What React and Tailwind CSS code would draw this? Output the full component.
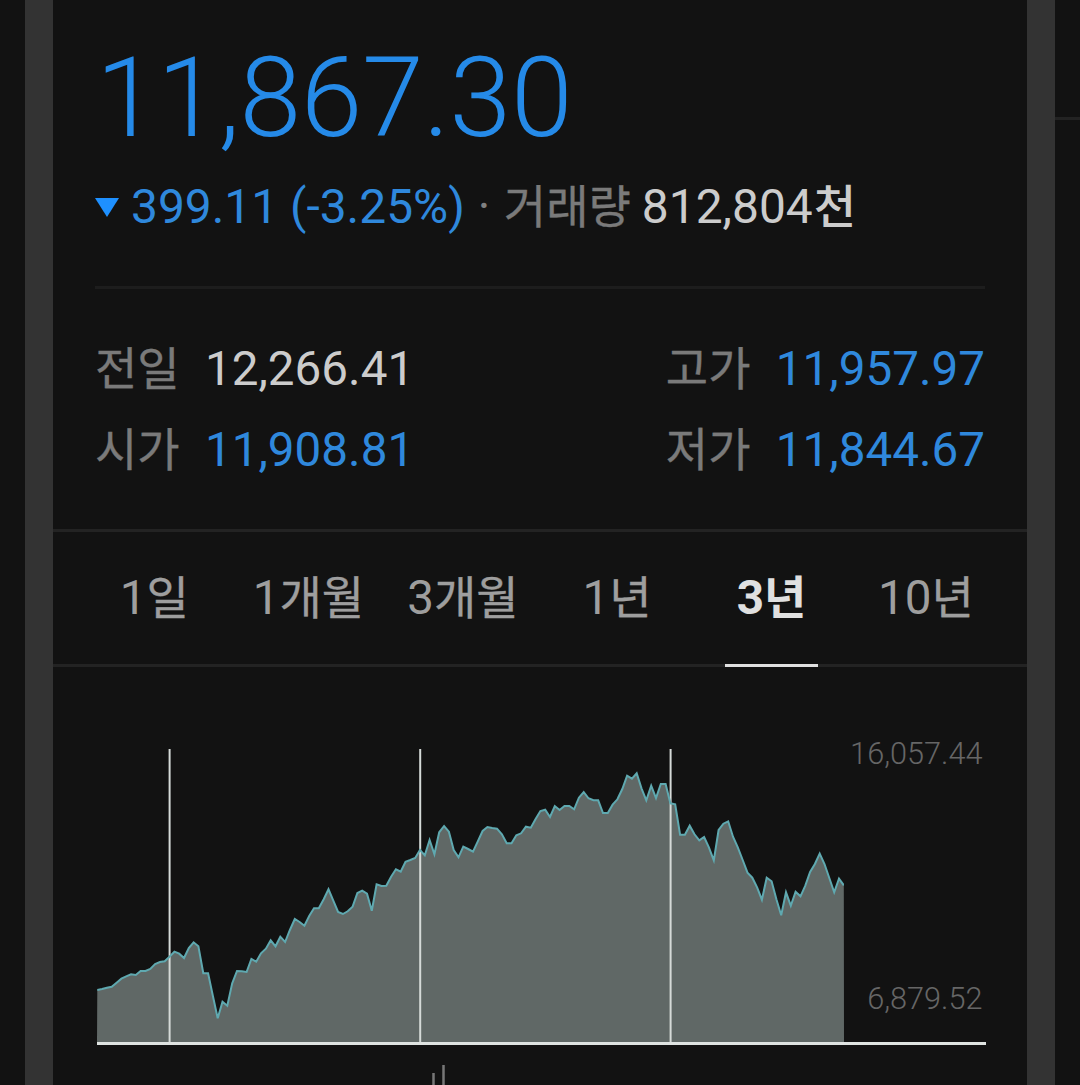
import React, { useState } from 'react';
import clsx from 'clsx';

const ranges = [
    { count: '1', unit: '일' },
    { count: '1', unit: '개월' },
    { count: '3', unit: '개월' },
    { count: '1', unit: '년' },
    { count: '3', unit: '년' },
    { count: '10', unit: '년' },
];

const quotes = [
    { label: '전일', value: '12,266.41', down: false },
    { label: '고가', value: '11,957.97', down: true },
    { label: '시가', value: '11,908.81', down: true },
    { label: '저가', value: '11,844.67', down: true },
];

// weekly closes, as offsets from the top of the plot
const closes = [
    250, 249, 247.7, 246.7, 242.7, 238.7, 236.3, 234.3, 235, 231, 231, 229, 224, 222, 221.3, 216.7,
    211.7, 213.7, 218, 208, 202.3, 206.3, 233.3, 233.3, 256, 278.3, 261.7, 265.7, 243.3, 231, 231.3, 232,
    219, 221.7, 213.3, 208.7, 200.3, 206.3, 196.7, 202, 190, 179, 182, 185.7, 176, 168.3, 168.3, 159.3,
    149.3, 160.7, 172, 174, 171.3, 166.7, 153, 150.7, 153.7, 170.7, 144.3, 146, 145.7, 136.7, 129.3, 131.7,
    121.7, 120, 118, 110, 115.3, 100, 114.3, 92.3, 86, 91.7, 110, 117.3, 106.7, 109, 111.7, 101.3,
    91, 87, 88, 88.7, 94.3, 103.3, 103.3, 95.3, 93.3, 86.7, 87.7, 79, 71, 69.7, 77, 66,
    70, 66, 66, 69.3, 57.7, 52, 58.3, 60.3, 60.3, 73, 73, 64.7, 59.3, 49, 35.7, 38.7,
    33.3, 48.3, 60.3, 45.7, 58, 44, 44, 63.3, 64.3, 94.7, 94.7, 85.7, 94.3, 100.3, 97, 107.3,
    120.3, 90, 83.7, 81.3, 96.7, 107.3, 120, 132.7, 137.7, 147.3, 159.7, 137.7, 141.3, 159.3, 175.3, 152.3,
    165.7, 151.7, 156.3, 145.7, 132, 124, 113.7, 124, 138.3, 152.3, 138.7, 145.3,
];

const yearLines = [72.6, 323.2, 573.6];

const PLOT_W = 747;
const PLOT_H = 302;

// Hangul runs a touch smaller than the digits beside it
function Ko({ children, className = '[-webkit-text-stroke:0.35px]' }) {
    return (
        <span className={clsx("font-['Noto_Sans_CJK_KR',sans-serif] text-[46px] leading-0", className)}>
            {children}
        </span>
    );
}

function PriceChart() {
    const step = (PLOT_W - 0.5) / (closes.length - 1);
    const line = closes.map((y, i) => `${(0.3 + i * step).toFixed(1)},${y}`).join(' ');

    return (
        <div className="flex h-[305px] border-b-[3px] border-[#dfe3e1]">
            <svg width={PLOT_W} height={PLOT_H} className="shrink-0">
                <polygon points={`0,${PLOT_H} ${line} ${PLOT_W},${PLOT_H}`} fill="#606866" />
                {yearLines.map((x) => (
                    <line key={x} x1={x} x2={x} y1="9" y2={PLOT_H} stroke="#d5dad8" strokeWidth="2" />
                ))}
                <polyline points={line} fill="none" stroke="#5fa9b0" strokeWidth="2" />
            </svg>
            <div className="flex flex-1 flex-col items-end justify-between pr-[3.5px] pb-[25px] text-[30.7px] leading-[36px] font-light text-[#666666]">
                <span className="-mt-1">16,057.44</span>
                <span>6,879.52</span>
            </div>
        </div>
    );
}

export default function App() {
    const [active, setActive] = useState(4);

    return (
        <div className="flex h-[1085px] w-[1080px] overflow-hidden bg-[#121212] font-[Roboto,'Noto_Sans_CJK_KR',sans-serif]">
            <div className="w-[25px] shrink-0" />
            <div className="w-7 shrink-0 bg-[#333333]" />

            <main className="flex w-[974px] shrink-0 flex-col">
                <header className="mx-[42px] h-[289px] border-b-[3px] border-[#1d1d1d] pt-8">
                    <div className="h-[132px] pl-px text-[111px] leading-[132px] font-light tracking-[-0.3px] text-[#258ae8]">
                        11,867.30
                    </div>
                    <div className="mt-2 flex h-[70px] items-center text-[47.9px] leading-[70px] whitespace-nowrap text-[#2f88dc]">
                        <svg width="24" height="20" viewBox="0 0 24 20" className="mt-0.5 mr-3 shrink-0">
                            <path d="M0 0h24L12 19z" fill="#1e90ff" />
                        </svg>
                        <span>399.11 (-3.25%)</span>
                        <span className="ml-[13px] w-[26px] text-[#808080]">·</span>
                        <span className="w-[138px] text-[#7a7a7a]">
                            <Ko>거래량</Ko>
                        </span>
                        <span className="text-[#cccccc]">
                            812,804<Ko className="pl-px font-medium">천</Ko>
                        </span>
                    </div>
                </header>

                <dl className="mx-[42px] grid h-[240px] grid-cols-[auto_auto] content-start justify-between pt-10 text-[47.6px] leading-[81px]">
                    {quotes.map((q) => (
                        <div key={q.label} className="flex h-[81px]">
                            <dt className="w-[110px] text-[#7a7a7a]">
                                <Ko>{q.label}</Ko>
                            </dt>
                            <dd className={q.down ? 'text-[#2f88dc]' : 'text-[#cccccc]'}>{q.value}</dd>
                        </div>
                    ))}
                </dl>

                <nav className="grid h-[138px] shrink-0 grid-cols-6 border-t-[3px] border-[#232323] px-6 shadow-[inset_0_-3px_0_#232323]">
                    {ranges.map((r, i) => (
                        <button
                            key={r.count + r.unit}
                            type="button"
                            onClick={() => setActive(i)}
                            className="flex justify-center text-[47.6px] leading-[133px] whitespace-nowrap"
                        >
                            <span
                                className={clsx(
                                    'h-[135px] border-b-[3px] px-3',
                                    i === active ? 'border-[#e0e0e0] font-bold text-[#e0e0e0]' : 'border-transparent text-[#9e9e9e]'
                                )}
                            >
                                {r.count}
                                <Ko className={i === active ? 'font-bold' : undefined}>{r.unit}</Ko>
                            </span>
                        </button>
                    ))}
                </nav>

                <section className="mt-[73px] mr-[41px] ml-[44px]">
                    <PriceChart />
                    {/* tops of the volume bars */}
                    <svg width="889" height="40">
                        <path d="M336.5 28v12M346.5 20v20" stroke="#777777" strokeWidth="2.5" />
                    </svg>
                </section>
            </main>

            <div className="w-7 shrink-0 bg-[#333333]" />
            <div className="h-[120px] flex-1 border-b-[3px] border-[#232323]" />
        </div>
    );
}
